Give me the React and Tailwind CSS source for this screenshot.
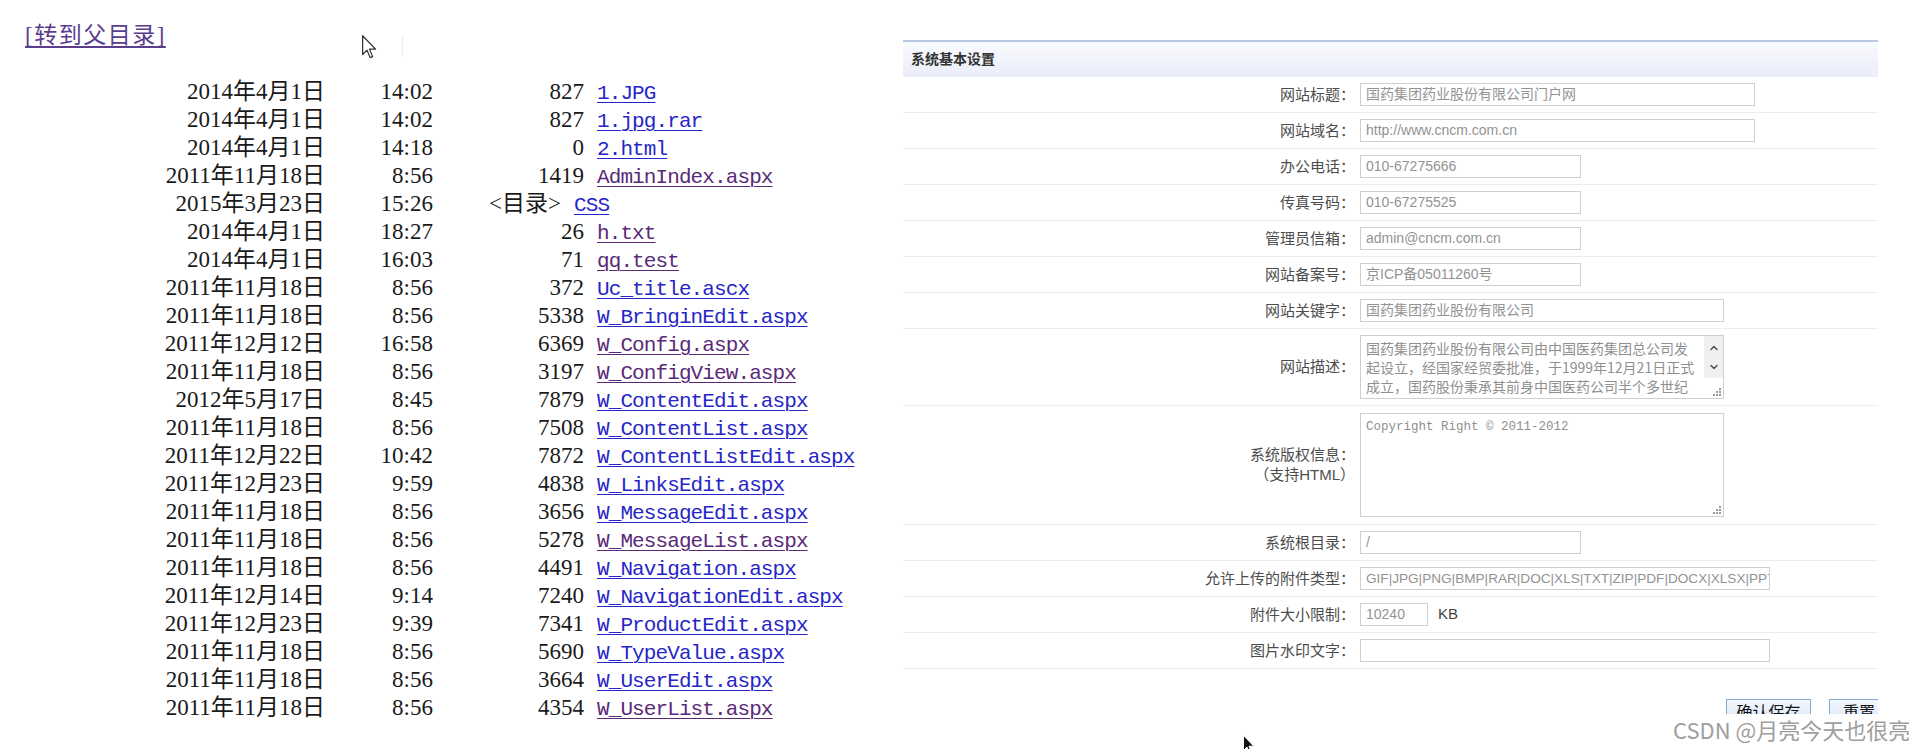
import React from 'react';
import { ChevronUp, ChevronDown } from 'lucide-react';

const BLUE = 'text-[#2626c8] decoration-[#2626c8]';
const PURPLE = 'text-[#5a2a78] decoration-[#5a2a78]';

const FILES = [
  ['2014年4月1日', '14:02', '827', '1.JPG', BLUE],
  ['2014年4月1日', '14:02', '827', '1.jpg.rar', BLUE],
  ['2014年4月1日', '14:18', '0', '2.html', BLUE],
  ['2011年11月18日', '8:56', '1419', 'AdminIndex.aspx', PURPLE],
  ['2015年3月23日', '15:26', '<目录>', 'CSS', BLUE, true],
  ['2014年4月1日', '18:27', '26', 'h.txt', PURPLE],
  ['2014年4月1日', '16:03', '71', 'qq.test', PURPLE],
  ['2011年11月18日', '8:56', '372', 'Uc_title.ascx', BLUE],
  ['2011年11月18日', '8:56', '5338', 'W_BringinEdit.aspx', BLUE],
  ['2011年12月12日', '16:58', '6369', 'W_Config.aspx', PURPLE],
  ['2011年11月18日', '8:56', '3197', 'W_ConfigView.aspx', PURPLE],
  ['2012年5月17日', '8:45', '7879', 'W_ContentEdit.aspx', BLUE],
  ['2011年11月18日', '8:56', '7508', 'W_ContentList.aspx', BLUE],
  ['2011年12月22日', '10:42', '7872', 'W_ContentListEdit.aspx', BLUE],
  ['2011年12月23日', '9:59', '4838', 'W_LinksEdit.aspx', BLUE],
  ['2011年11月18日', '8:56', '3656', 'W_MessageEdit.aspx', BLUE],
  ['2011年11月18日', '8:56', '5278', 'W_MessageList.aspx', PURPLE],
  ['2011年11月18日', '8:56', '4491', 'W_Navigation.aspx', BLUE],
  ['2011年12月14日', '9:14', '7240', 'W_NavigationEdit.aspx', BLUE],
  ['2011年12月23日', '9:39', '7341', 'W_ProductEdit.aspx', BLUE],
  ['2011年11月18日', '8:56', '5690', 'W_TypeValue.aspx', BLUE],
  ['2011年11月18日', '8:56', '3664', 'W_UserEdit.aspx', BLUE],
  ['2011年11月18日', '8:56', '4354', 'W_UserList.aspx', PURPLE],
];

const TOP_FIELDS = [
  { label: '网站标题：', w: 'w-[395px]', v: '国药集团药业股份有限公司门户网' },
  { label: '网站域名：', w: 'w-[395px]', v: 'http://www.cncm.com.cn' },
  { label: '办公电话：', w: 'w-[221px]', v: '010-67275666' },
  { label: '传真号码：', w: 'w-[221px]', v: '010-67275525' },
  { label: '管理员信箱：', w: 'w-[221px]', v: 'admin@cncm.com.cn' },
  { label: '网站备案号：', w: 'w-[221px]', v: '京ICP备05011260号' },
  { label: '网站关键字：', w: 'w-[364px]', v: '国药集团药业股份有限公司' },
];

const BOTTOM_FIELDS = [
  { label: '系统根目录：', w: 'w-[221px]', v: '/' },
  { label: '允许上传的附件类型：', w: 'w-[410px]', v: 'GIF|JPG|PNG|BMP|RAR|DOC|XLS|TXT|ZIP|PDF|DOCX|XLSX|PPT|PPTX', small: true },
  { label: '附件大小限制：', w: 'w-[68px]', v: '10240', suffix: 'KB' },
  { label: '图片水印文字：', w: 'w-[410px]', v: '' },
];

function Grip() {
  return (
    <svg width="8" height="8" viewBox="0 0 8 8" className="absolute right-[2px] bottom-[2px]">
      <rect x="6" y="0" width="2" height="2" fill="#9a9a9a" />
      <rect x="3" y="3" width="2" height="2" fill="#9a9a9a" />
      <rect x="6" y="3" width="2" height="2" fill="#9a9a9a" />
      <rect x="0" y="6" width="2" height="2" fill="#9a9a9a" />
      <rect x="3" y="6" width="2" height="2" fill="#9a9a9a" />
      <rect x="6" y="6" width="2" height="2" fill="#9a9a9a" />
    </svg>
  );
}

function Label({ children }) {
  return (
    <div className="w-[452px] shrink-0 text-right text-[15px] leading-[20px] text-[#4d4d4d]">{children}</div>
  );
}

function FieldRow({ f }) {
  return (
    <div className="flex items-center py-[6px] border-b border-[#ededed]">
      <Label>{f.label}</Label>
      <div
        className={`ml-[5px] h-[23px] ${f.w} border border-[#cfcfcf] bg-white px-[5px] ${f.small ? 'text-[13.6px]' : 'text-[14px]'} leading-[21px] text-[#939393] whitespace-nowrap overflow-hidden`}
      >
        {f.v}
      </div>
      {f.suffix && <span className="ml-[10px] text-[15px] text-[#444]">{f.suffix}</span>}
    </div>
  );
}

export default function App() {
  return (
    <div className="relative w-[1920px] h-[749px] bg-white overflow-hidden flex">
      {/* directory listing */}
      <div className="w-[903px] shrink-0 font-['Liberation_Serif','Noto_Sans_CJK_SC',serif] text-[23px] leading-[28px] text-[#1a1a1a]">
        <div className="pt-[22px] pl-[25px]">
          <a href="#" className="text-[#5a3d8c] tracking-[1.5px] underline underline-offset-[3px] decoration-[1.5px]">
            [转到父目录]
          </a>
        </div>
        <div className="mt-[28px]">
          {FILES.map(([date, time, size, name, color, dir]) => (
            <div key={name} className="flex items-baseline h-[28px] whitespace-nowrap">
              <span className="w-[325px] text-right">{date}</span>
              <span className="w-[108px] text-right">{time}</span>
              <span className={dir ? 'w-[128px] text-right' : 'w-[151px] text-right'}>{size}</span>
              <a
                href="#"
                className={`ml-[13px] font-['Liberation_Mono',monospace] text-[21px] tracking-[-0.9px] underline underline-offset-[3px] decoration-1 ${color}`}
              >
                {name}
              </a>
            </div>
          ))}
        </div>
      </div>

      {/* settings panel */}
      <div className="w-[975px] shrink-0 mt-[40px] h-[674px] overflow-hidden font-['Liberation_Sans','Noto_Sans_CJK_SC',sans-serif]">
        <div className="border-t-2 border-[#b8c8e2] h-[37px] bg-gradient-to-b from-[#fafbfe] to-[#eaedf9] pl-[8px] flex items-center">
          <span className="text-[14px] font-bold text-[#333]">系统基本设置</span>
        </div>

        {TOP_FIELDS.map((f) => (
          <FieldRow key={f.label} f={f} />
        ))}

        <div className="flex items-center py-[6px] border-b border-[#ededed]">
          <Label>网站描述：</Label>
          <div className="relative ml-[5px] w-[364px] h-[64px] border border-[#cfcfcf] bg-white overflow-hidden">
            <div className="pl-[5px] pt-[3px] pr-[20px] text-[14px] leading-[18.8px] text-[#8f8f8f] font-['Noto_Sans_CJK_SC',sans-serif] whitespace-nowrap">
              <div>国药集团药业股份有限公司由中国医药集团总公司发</div>
              <div>起设立，经国家经贸委批准，于1999年12月21日正式</div>
              <div>成立，国药股份秉承其前身中国医药公司半个多世纪</div>
            </div>
            <div className="absolute right-0 top-0 w-[19px] h-[42px] bg-[#f0f0f0] flex flex-col items-center justify-around py-[2px]">
              <ChevronUp size={12} strokeWidth={3} className="text-[#505050]" />
              <ChevronDown size={12} strokeWidth={3} className="text-[#505050]" />
            </div>
            <Grip />
          </div>
        </div>

        <div className="flex items-center py-[7px] border-b border-[#ededed]">
          <div className="w-[452px] shrink-0 text-right text-[15px] leading-[20px] text-[#4d4d4d]">
            <div>系统版权信息：</div>
            <div>（支持HTML）</div>
          </div>
          <div className="relative ml-[5px] w-[364px] h-[104px] border border-[#cfcfcf] bg-white">
            <div className="pl-[5px] pt-[5px] font-['Liberation_Mono',monospace] text-[12.5px] leading-[16px] text-[#8f8f8f]">
              Copyright Right © 2011-2012
            </div>
            <Grip />
          </div>
        </div>

        {BOTTOM_FIELDS.map((f) => (
          <FieldRow key={f.label} f={f} />
        ))}

        <div className="flex justify-end pt-[30px] mr-[-11px]">
          <button className="w-[85px] h-[28px] border border-[#86a9d4] bg-gradient-to-b from-[#f3f8fd] to-[#d5e3f5] text-[16px] text-[#111]">
            确认保存
          </button>
          <button className="ml-[18px] w-[60px] h-[28px] border border-[#86a9d4] bg-gradient-to-b from-[#f3f8fd] to-[#d5e3f5] text-[16px] text-[#111]">
            重置
          </button>
        </div>
      </div>

      {/* mouse pointers */}
      <svg className="absolute left-[362px] top-[35px]" width="15" height="24" viewBox="0 0 12 19">
        <path d="M0.5 0.5 L0.5 15.5 L4 12 L6.5 18 L8.5 17.2 L6 11.2 L10.8 11.2 Z" fill="white" stroke="#333" strokeWidth="1" strokeLinejoin="round" />
      </svg>
      <div className="absolute left-[402px] top-[35px] w-px h-[22px] bg-[#ececec]" />
      <svg className="absolute left-[1243px] top-[735px]" width="12" height="19" viewBox="0 0 12 19">
        <path d="M0.5 0.5 L0.5 15.5 L4 12 L6.5 18 L8.5 17.2 L6 11.2 L10.8 11.2 Z" fill="#111" stroke="white" strokeWidth="1" />
      </svg>

      {/* watermark */}
      <div className="absolute left-[1673px] top-[715px] text-[22px] leading-[28px] text-[#9e9e9e] font-['Noto_Sans_CJK_SC',sans-serif] whitespace-nowrap [text-shadow:0_0_2px_#fff]">
        CSDN @月亮今天也很亮
      </div>
    </div>
  );
}
